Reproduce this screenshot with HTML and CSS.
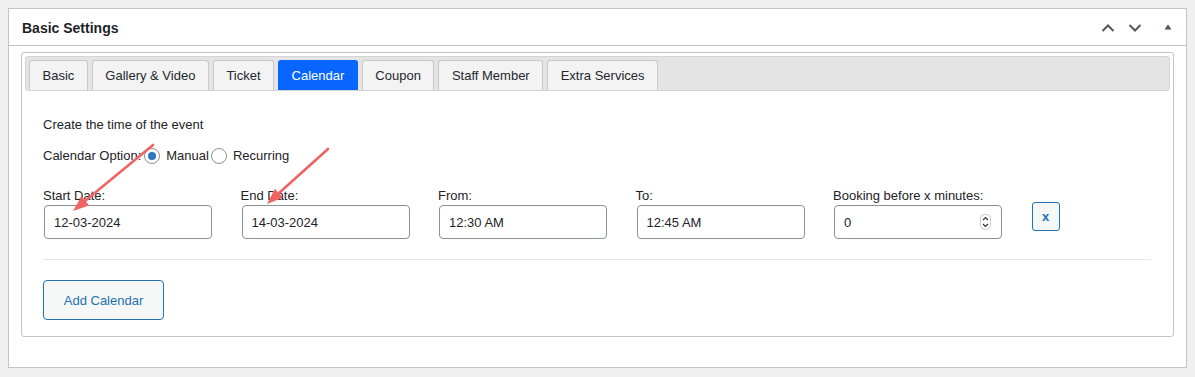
FILE: index.html
```html
<!DOCTYPE html>
<html>
<head>
<meta charset="utf-8">
<link rel="stylesheet" href="styles.css">
</head>
<body>
<div class="page">
  <div class="panel">
    <div class="panel-head">
      <h2 class="panel-title">Basic Settings</h2>
      <div class="panel-actions">
        <svg class="act" width="14" height="10" viewBox="0 0 14 10"><path d="M1.5 8 L7 2.5 L12.5 8" fill="none" stroke="#50575e" stroke-width="2"/></svg>
        <svg class="act" width="14" height="10" viewBox="0 0 14 10"><path d="M1.5 2 L7 7.5 L12.5 2" fill="none" stroke="#50575e" stroke-width="2"/></svg>
        <svg class="act act-tri" width="10" height="8" viewBox="0 0 10 8"><path d="M1.5 6.5 L5 1.5 L8.5 6.5 Z" fill="#50575e"/></svg>
      </div>
    </div>
    <div class="panel-body">
      <div class="box">
        <div class="tabs">
          <div class="tab">Basic</div>
          <div class="tab">Gallery &amp; Video</div>
          <div class="tab">Ticket</div>
          <div class="tab active">Calendar</div>
          <div class="tab">Coupon</div>
          <div class="tab">Staff Member</div>
          <div class="tab">Extra Services</div>
        </div>
        <div class="content">
          <p class="line">Create the time of the event</p>
          <div class="line option-row">
            <span class="opt-label">Calendar Option:</span>
            <label class="radio"><input type="radio" name="opt" checked><span>Manual</span></label>
            <label class="radio"><input type="radio" name="opt"><span>Recurring</span></label>
          </div>
          <div class="fields">
            <div class="field">
              <label class="field-label">Start Date:</label>
              <div class="input"><input type="text" value="12-03-2024"></div>
            </div>
            <div class="field">
              <label class="field-label">End Date:</label>
              <div class="input"><input type="text" value="14-03-2024"></div>
            </div>
            <div class="field">
              <label class="field-label">From:</label>
              <div class="input"><input type="text" value="12:30 AM"></div>
            </div>
            <div class="field">
              <label class="field-label">To:</label>
              <div class="input"><input type="text" value="12:45 AM"></div>
            </div>
            <div class="field">
              <label class="field-label">Booking before x minutes:</label>
              <div class="input">
                <input type="text" value="0">
                <svg class="spin" width="11" height="16" viewBox="0 0 11 16"><rect x="0.5" y="0.5" width="10" height="15" rx="4" fill="#fff" stroke="#c9c9c9"/><path d="M3 6 L5.5 3.5 L8 6" fill="none" stroke="#333" stroke-width="1.2"/><path d="M3 10 L5.5 12.5 L8 10" fill="none" stroke="#333" stroke-width="1.2"/></svg>
              </div>
            </div>
            <button class="btn-x">x</button>
          </div>
          <hr class="sep">
          <button class="btn-add">Add Calendar</button>
        </div>
      </div>
    </div>
  </div>
  <svg class="arrows" width="1195" height="377" viewBox="0 0 1195 377">
    <line x1="153" y1="145" x2="85" y2="201" stroke="#f06464" stroke-width="2.6" stroke-linecap="round"/>
    <polygon points="73,211 89.1,205.4 81.5,196.2" fill="#f06464"/>
    <line x1="328" y1="149" x2="279" y2="193" stroke="#f06464" stroke-width="2.6" stroke-linecap="round"/>
    <polygon points="267,204 282.9,197.8 274.9,188.8" fill="#f06464"/>
  </svg>
</div>
</body>
</html>
```

FILE: styles.css
```css
* { box-sizing: border-box; }

html, body {
  margin: 0;
  padding: 0;
  background: #f0f0f1;
}

body {
  font-family: "Liberation Sans", Arial, sans-serif;
  font-size: 13px;
  color: #1d2327;
}

.page {
  position: relative;
  width: 1195px;
  height: 377px;
  padding: 8px 8px 9px;
}

.panel {
  background: #fff;
  border: 1px solid #c3c4c7;
}

.panel-head {
  height: 37px;
  border-bottom: 1px solid #c3c4c7;
  display: flex;
  align-items: center;
  justify-content: space-between;
  padding: 0 13px 0 13px;
}

.panel-title {
  margin: 0;
  font-size: 14px;
  font-weight: 700;
  color: #1d2327;
  padding-top: 1px;
}

.panel-actions {
  display: flex;
  align-items: center;
  gap: 13px;
  padding-top: 1px;
}

.act-tri {
  margin-left: 8px;
  margin-top: -2px;
}

.panel-body {
  padding: 6px 12px 30px;
}

.box {
  border: 1px solid #c3c4c7;
  border-radius: 3px;
  padding: 3px 3px 0;
}

.tabs {
  display: flex;
  gap: 4px;
  background: #e4e4e4;
  border: 1px solid #d4d4d4;
  border-radius: 3px;
  padding: 3px 3px 0;
}

.tab {
  height: 30px;
  line-height: 29px;
  padding: 0 12.5px;
  border: 1px solid #c9c9c9;
  border-bottom: none;
  border-radius: 3px 3px 0 0;
  background: #f3f3f3;
  color: #23282d;
  font-size: 13px;
  white-space: nowrap;
}

.tab.active {
  background: #0866ff;
  border-color: #0866ff;
  color: #fff;
}

.content {
  padding: 25px 19px 16px 18px;
}

.line {
  margin: 0;
  height: 18px;
  line-height: 18px;
}

.option-row {
  margin-top: 13px;
  display: flex;
  align-items: center;
}

.opt-label {
  margin-right: 3px;
}

.radio {
  display: flex;
  align-items: center;
  gap: 6px;
  margin-right: 2px;
}

.radio input {
  appearance: none;
  -webkit-appearance: none;
  margin: 0;
  width: 16px;
  height: 16px;
  border: 1px solid #8c8f94;
  border-radius: 50%;
  background: #fff;
  display: inline-grid;
  place-items: center;
}

.radio input:checked::before {
  content: "";
  width: 8px;
  height: 8px;
  border-radius: 50%;
  background: #2f77c0;
}

.fields {
  margin-top: 22px;
  display: flex;
  align-items: center;
  gap: 29.5px;
  padding-left: 1px;
}

.field {
  width: 168px;
  display: flex;
  flex-direction: column;
}

.field-label {
  height: 18px;
  line-height: 18px;
  margin-left: -1px;
}

.input {
  height: 34px;
  border: 1px solid #8c8f94;
  border-radius: 4px;
  display: flex;
  align-items: center;
  padding: 0 10px 0 9px;
  background: #fff;
}

.input input {
  border: none;
  outline: none;
  padding: 0;
  margin: 0;
  flex: 1;
  min-width: 0;
  font-family: inherit;
  font-size: 13px;
  color: #1d2327;
  background: transparent;
}

.spin {
  flex: none;
}

.btn-x {
  width: 28px;
  height: 29px;
  margin-top: 7px;
  border: 1px solid #2271b1;
  border-radius: 3px;
  background: #f6f7f7;
  color: #2271b1;
  font-family: inherit;
  font-size: 13px;
  font-weight: 700;
  padding: 0;
}

.sep {
  margin: 20px 0 20px;
  border: none;
  border-top: 1px solid #e6e6e6;
  height: 0;
}

.btn-add {
  display: block;
  height: 40px;
  width: 121px;
  border: 1px solid #2271b1;
  border-radius: 4px;
  background: #f6f7f7;
  color: #2271b1;
  font-family: inherit;
  font-size: 13px;
  padding: 0;
}

.arrows {
  position: absolute;
  left: 0;
  top: 0;
  pointer-events: none;
}
```
